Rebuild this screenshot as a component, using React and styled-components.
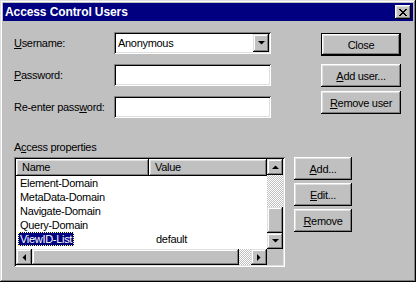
import React from 'react';
import styled, { createGlobalStyle } from 'styled-components';

const GlobalStyle = createGlobalStyle`
    body {
        margin: 0;
        background: #c0c0c0;
    }
`;

const raised = `
    box-shadow: inset -1px -1px #000, inset 1px 1px #fff, inset -2px -2px #808080, inset 2px 2px #dfdfdf;
`;

const sunken = `
    box-shadow: inset 1px 1px #808080, inset -1px -1px #fff, inset 2px 2px #000, inset -2px -2px #dfdfdf;
`;

const Window = styled.div`
    width: 416px;
    height: 282px;
    box-sizing: border-box;
    padding: 3px;
    background: #c0c0c0;
    box-shadow: inset -1px -1px #000, inset 1px 1px #dfdfdf, inset -2px -2px #808080, inset 2px 2px #fff;
    font-family: "Liberation Sans", Arial, sans-serif;
    font-size: 11px;
    letter-spacing: -0.3px;
    color: #000;
    display: flex;
    flex-direction: column;
`;

const TitleBar = styled.div`
    height: 18px;
    background: #000080;
    display: flex;
    align-items: center;
    justify-content: space-between;
    padding: 0 2px 0 2px;
`;

const Title = styled.span`
    color: #fff;
    font-weight: bold;
    font-size: 12px;
    letter-spacing: -0.1px;
`;

const CloseBox = styled.div`
    width: 16px;
    height: 14px;
    background: #c0c0c0;
    ${raised}
    display: flex;
    align-items: center;
    justify-content: center;
    padding-right: 1px;
    box-sizing: border-box;
`;

const Body = styled.div`
    padding: 11px 0 0 11px;
    display: flex;
    flex-direction: column;
`;

const TopSection = styled.div`
    display: flex;
`;

const Form = styled.div`
    display: flex;
    flex-direction: column;
    gap: 10px;
`;

const Row = styled.div`
    display: grid;
    grid-template-columns: 100px 157px;
    align-items: center;
    height: 22px;
`;

const Field = styled.div`
    height: 22px;
    box-sizing: border-box;
    background: #fff;
    ${sunken}
    display: flex;
    align-items: center;
    padding: 2px 2px 2px 4px;
`;

const ComboText = styled.span`
    flex: 1;
`;

const ComboButton = styled.div`
    width: 16px;
    height: 18px;
    background: #c0c0c0;
    box-shadow: inset -1px -1px #000, inset 1px 1px #dfdfdf, inset -2px -2px #808080, inset 2px 2px #fff;
    display: flex;
    align-items: center;
    justify-content: center;
`;

const ButtonColumn = styled.div`
    display: flex;
    flex-direction: column;
    margin-left: ${p => p.$gap}px;
    padding-top: ${p => p.$top || 0}px;
    gap: ${p => p.$spacing}px;
`;

const Button = styled.div`
    width: ${p => p.$width}px;
    height: 23px;
    box-sizing: border-box;
    background: #c0c0c0;
    display: flex;
    align-items: center;
    justify-content: center;
    ${p => p.$default
        ? 'box-shadow: inset 0 0 0 1px #000, inset -2px -2px #000, inset 2px 2px #fff, inset -3px -3px #808080, inset 3px 3px #dfdfdf;'
        : raised}
    margin-bottom: ${p => p.$after || 0}px;
`;

const SectionLabel = styled.div`
    margin-top: 23px;
    line-height: 13px;
    height: 13px;
    margin-bottom: 3px;
`;

const BottomSection = styled.div`
    display: flex;
`;

const ListFrame = styled.div`
    width: 271px;
    height: 110px;
    box-sizing: border-box;
    padding: 2px;
    background: #fff;
    ${sunken}
    display: grid;
    grid-template-columns: 1fr 16px;
    grid-template-rows: 1fr 16px;
`;

const ListContent = styled.div`
    overflow: hidden;
`;

const Header = styled.div`
    display: grid;
    grid-template-columns: 133px 1fr;
    height: 17px;
`;

const HeaderCell = styled.div`
    background: #c0c0c0;
    ${raised}
    line-height: 17px;
    padding-left: 6px;
`;

const ItemRow = styled.div`
    display: grid;
    grid-template-columns: 133px 1fr;
    height: 14px;
    line-height: 14px;
`;

const NameCell = styled.div`
    padding-left: 4px;
    white-space: nowrap;
`;

const ValueCell = styled.div`
    padding-left: 7px;
`;

const Selected = styled.span`
    background: #000080;
    color: #fff;
    margin-left: -2px;
    padding: 0 2px;
    display: inline-block;
    height: 14px;
    box-sizing: border-box;
    outline: 1px dotted #ffff80;
    outline-offset: -1px;
`;

const VScroll = styled.div`
    display: flex;
    flex-direction: column;
`;

const HScroll = styled.div`
    display: flex;
`;

const ScrollButton = styled.div`
    width: 16px;
    height: 16px;
    flex: none;
    background: #c0c0c0;
    box-shadow: inset -1px -1px #000, inset 1px 1px #dfdfdf, inset -2px -2px #808080, inset 2px 2px #fff;
    display: flex;
    align-items: center;
    justify-content: center;
`;

const Track = styled.div`
    flex: ${p => p.$size ? 'none' : 1};
    ${p => p.$vertical ? `height: ${p.$size}px;` : `width: ${p.$size}px;`}
    background-color: #fff;
    background-image: repeating-conic-gradient(#c0c0c0 0 25%, #fff 0 50%);
    background-size: 2px 2px;
`;

const Thumb = styled.div`
    flex: ${p => p.$size ? 'none' : 1};
    ${p => p.$vertical ? `height: ${p.$size}px;` : `width: ${p.$size}px;`}
    background: #c0c0c0;
    box-shadow: inset -1px -1px #000, inset 1px 1px #dfdfdf, inset -2px -2px #808080, inset 2px 2px #fff;
`;

const Corner = styled.div`
    background: #c0c0c0;
`;

const arrows = {
    up: { w: 7, h: 4, pts: '0,4 7,4 3.5,0.5' },
    down: { w: 7, h: 4, pts: '0,0 7,0 3.5,3.5' },
    left: { w: 4, h: 7, pts: '4,0 4,7 0.5,3.5' },
    right: { w: 4, h: 7, pts: '0,0 0,7 3.5,3.5' },
};

const Arrow = ({ dir }) => {
    const a = arrows[dir];
    return (
        <svg width={a.w} height={a.h} viewBox={`0 0 ${a.w} ${a.h}`}>
            <polygon points={a.pts} fill="#000" />
        </svg>
    );
};

const CloseGlyph = () => {
    const px = [
        [0, 0], [1, 0], [6, 0], [7, 0],
        [1, 1], [2, 1], [5, 1], [6, 1],
        [2, 2], [3, 2], [4, 2], [5, 2],
        [3, 3], [4, 3],
        [2, 4], [3, 4], [4, 4], [5, 4],
        [1, 5], [2, 5], [5, 5], [6, 5],
        [0, 6], [1, 6], [6, 6], [7, 6],
    ];
    return (
        <svg width="8" height="7" viewBox="0 0 8 7" shapeRendering="crispEdges">
            {px.map(([x, y]) => <rect key={`${x}-${y}`} x={x} y={y} width="1" height="1" fill="#000" />)}
        </svg>
    );
};

const items = [
    { name: 'Element-Domain', value: '' },
    { name: 'MetaData-Domain', value: '' },
    { name: 'Navigate-Domain', value: '' },
    { name: 'Query-Domain', value: '' },
    { name: 'ViewID-List', value: 'default', selected: true },
];

const App = () => {
    return (
        <>
            <GlobalStyle />
            <Window>
                <TitleBar>
                    <Title>Access Control Users</Title>
                    <CloseBox><CloseGlyph /></CloseBox>
                </TitleBar>
                <Body>
                    <TopSection>
                        <Form>
                            <Row>
                                <span><u>U</u>sername:</span>
                                <Field>
                                    <ComboText>Anonymous</ComboText>
                                    <ComboButton><Arrow dir="down" /></ComboButton>
                                </Field>
                            </Row>
                            <Row>
                                <span><u>P</u>assword:</span>
                                <Field />
                            </Row>
                            <Row>
                                <span>Re-enter pass<u>w</u>ord:</span>
                                <Field />
                            </Row>
                        </Form>
                        <ButtonColumn $gap={50} $top={1} $spacing={0}>
                            <Button $width={80} $default $after={8}>Close</Button>
                            <Button $width={80} $after={4}><span><u>A</u>dd user...</span></Button>
                            <Button $width={80}><span><u>R</u>emove user</span></Button>
                        </ButtonColumn>
                    </TopSection>
                    <SectionLabel>A<u>c</u>cess properties</SectionLabel>
                    <BottomSection>
                        <ListFrame>
                            <ListContent>
                                <Header>
                                    <HeaderCell>Name</HeaderCell>
                                    <HeaderCell>Value</HeaderCell>
                                </Header>
                                {items.map(item => (
                                    <ItemRow key={item.name}>
                                        <NameCell>
                                            {item.selected ? <Selected>{item.name}</Selected> : item.name}
                                        </NameCell>
                                        <ValueCell>{item.value}</ValueCell>
                                    </ItemRow>
                                ))}
                            </ListContent>
                            <VScroll>
                                <ScrollButton><Arrow dir="up" /></ScrollButton>
                                <Track $vertical />
                                <Thumb $vertical $size={26} />
                                <ScrollButton><Arrow dir="down" /></ScrollButton>
                            </VScroll>
                            <HScroll>
                                <ScrollButton><Arrow dir="left" /></ScrollButton>
                                <Thumb />
                                <Track $size={12} />
                                <ScrollButton><Arrow dir="right" /></ScrollButton>
                            </HScroll>
                            <Corner />
                        </ListFrame>
                        <ButtonColumn $gap={9} $spacing={3}>
                            <Button $width={58}><span><u>A</u>dd...</span></Button>
                            <Button $width={58}><span><u>E</u>dit...</span></Button>
                            <Button $width={58}><span><u>R</u>emove</span></Button>
                        </ButtonColumn>
                    </BottomSection>
                </Body>
            </Window>
        </>
    );
};

export default App;
